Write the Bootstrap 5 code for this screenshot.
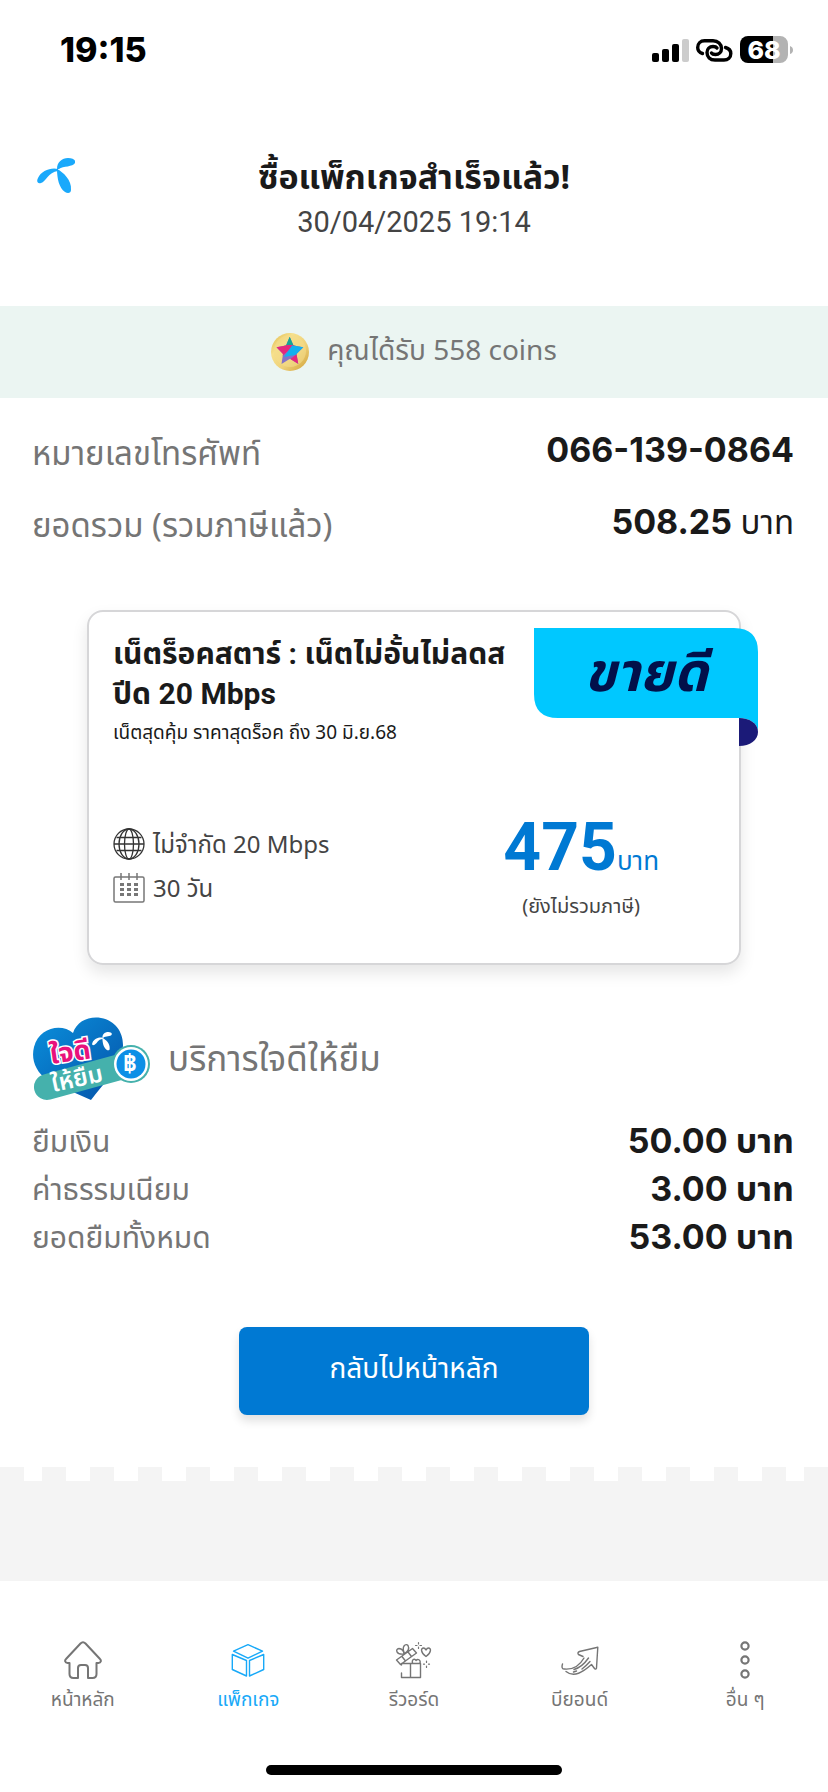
<!DOCTYPE html>
<html lang="th">
<head>
<meta charset="utf-8">
<meta name="viewport" content="width=device-width, initial-scale=1">
<title>ซื้อแพ็กเกจสำเร็จแล้ว!</title>
<link href="https://cdn.jsdelivr.net/npm/bootstrap@5.3.0/dist/css/bootstrap.min.css" rel="stylesheet">
<style>
  body { font-family: "Noto Sans", "Noto Sans Thai", sans-serif; color: #1a1a1a; background: #fff; font-size: 30px; line-height: 48px; }
  svg { display: block; flex: none; }
  .status { height: 100px; padding: 0 34px 0 60px; font-family: Inter, sans-serif; font-size: 34px; font-weight: 800; color: #000; }
  .batt { font: 800 25px Inter, sans-serif; }
  .page-head { height: 206px; padding: 52px 32px 0; }
  .brand { left: 37px; top: 58px; }
  .t-title { font-size: 34px; line-height: 48px; font-weight: 700; }
  .t-date { color: #444; font-family: Roboto, sans-serif; font-size: 29px; line-height: 44px; }
  .coins { height: 92px; background: #ebf5f2; color: #757575; gap: 18px; font-size: 28px; line-height: 40px; }
  .coins span { padding-bottom: 6px; }
  .muted { color: #757575; }
  .num { font-family: Inter, "Noto Sans Thai", sans-serif; font-size: 34px; font-weight: 700; }
  .detail { padding: 16px 34px 0 32px; font-size: 33px; }
  .detail > div { height: 72px; }
  .detail .muted { padding-top: 6px; }
  .pack { margin: 52px 87px 0; min-height: 355px; border: 2px solid #d6d6d8; border-radius: 16px; box-shadow: 0 8px 16px rgba(0,0,0,.1); padding: 22px 24px; }
  .pack h2 { font-family: Roboto, "Noto Sans Thai", sans-serif; font-size: 30px; line-height: 40px; font-weight: 700; margin: 0; }
  .pack-note { font-size: 19px; line-height: 36px; }
  .facts { margin-top: 62px; }
  .specs { padding-top: 10px; }
  .spec { font-size: 24px; line-height: 44px; color: #444; gap: 8px; }
  .price { margin-right: 56px; padding-top: 4px; font-size: 20px; line-height: 28px; color: #444; }
  .price p { color: #0079d3; font-size: 26px; line-height: 64px; margin: 0; }
  .price b { font-family: Roboto, sans-serif; font-size: 66px; }
  .ribbon { right: -19px; top: 16px; }
  .ribbon span { inset: 0 0 28px; color: #02104a; font-size: 54px; font-weight: 700; font-style: italic; line-height: 84px; }
  .loan { padding: 50px 34px 0 32px; }
  .loan h2 { font-size: 35px; line-height: 48px; font-weight: 400; margin: 0; }
  .loan-head { gap: 18px; margin-bottom: 16px; }
  .btn-home { width: 350px; height: 88px; margin: 66px 0 52px; background: #0079d3; color: #fff; font-size: 28px; border: 0; border-radius: 8px; box-shadow: 0 6px 10px rgba(0,0,0,.12); padding-bottom: 14px; }
  .btn-home:hover { background: #006bbb; color: #fff; }
  .tear { height: 114px; background: #f4f4f4; padding: 0 24px; }
  .tear div { height: 14px; background: repeating-linear-gradient(90deg, #fff 0 18px, #f4f4f4 18px 42px, #fff 42px 48px); }
  .tabs { height: 210px; padding-top: 60px; }
  .tabs a { flex: 1 1 0; text-align: center; text-decoration: none; color: #757575; font-size: 19px; line-height: 28px; }
  .tabs a.on { color: #18a9f8; }
  .tabs svg { margin: 0 auto 6px; fill: none; stroke: currentColor; stroke-linecap: round; stroke-linejoin: round; }
  .grip { width: 296px; height: 10px; border-radius: 5px; background: #000; bottom: 16px; }
</style>
</head>
<body>
<div class="status d-flex justify-content-between align-items-center">
  <span>19:15</span>
  <svg width="143" height="30" viewBox="0 0 143 30">
    <rect x="1" y="18" width="7" height="9" rx="2"/><rect x="11" y="14" width="7" height="13" rx="2"/><rect x="21" y="9" width="7" height="18" rx="2"/><rect x="31" y="4" width="7" height="23" rx="2" fill="#ccc"/>
    <g fill="none" stroke="#000" stroke-width="3.4" stroke-linecap="round" transform="translate(45 4)"><path d="M6.500 14.500C3 13.500 1.700 11 1.700 8.500C1.700 4.500 4.500 1.700 8.500 1.700H17C22 1.700 25.500 5 25.500 9.500C25.500 13 23 15.500 19.500 15.500C17.500 15.500 16 14.800 15.500 14"/><path d="M29.500 8.500C33 9.500 34.800 12 34.800 14.500C34.800 18.500 32 21 28 21H19C14 21 11 18 11 13.500C11 10 13.500 7.500 17 7.500C19 7.500 20.500 8.200 21 9"/></g>
    <path d="M97 1h25v27H97a8 8 0 0 1-8-8V9a8 8 0 0 1 8-8z"/><path d="M122 1h7a8 8 0 0 1 8 8v11a8 8 0 0 1-8 8h-7zM139 11q3 1 3 4t-3 4z" fill="#b3b3b3"/>
    <text class="batt" x="113" y="24" text-anchor="middle" fill="#fff">68</text>
  </svg>
</div>

<header class="page-head position-relative text-center">
  <a href="#" class="brand position-absolute" aria-label="ดีแทค">
    <svg width="38" height="36" viewBox="0 0 38 36" fill="#1aa9fb"><path d="M20 11C20 4 25 0 31 0c5 0 8 2 7 5-2 4-12 3-16 6z"/><path d="M21 11C14 9 4 13 1 20c-2 4 0 6 3 5C9 24 11 14 21 13z"/><path d="M20 11c6 3 15 11 14 21 0 3-3 4-6 2-6-4-8-14-8-23z"/></svg>
  </a>
  <h1 class="t-title m-0">ซื้อแพ็กเกจสำเร็จแล้ว!</h1>
  <div class="t-date">30/04/2025 19:14</div>
</header>

<main>
<section class="coins d-flex justify-content-center align-items-center">
  <svg width="38" height="38" viewBox="0 0 38 38">
    <defs>
      <linearGradient id="gold" x1="0" y1="0" x2="1" y2="1"><stop offset="0" stop-color="#e0b848"/><stop offset=".3" stop-color="#f6e08c"/><stop offset=".6" stop-color="#efd27a"/><stop offset="1" stop-color="#cf9f34"/></linearGradient>
      <clipPath id="star"><path d="M18.700 3.700L22.500 12.500L32.300 14.300L25.500 21L27.300 31L19 25.700L10.500 31L12 21L5.500 14.300L15 12.500z"/></clipPath>
    </defs>
    <circle cx="19" cy="19" r="19" fill="url(#gold)"/><circle cx="19" cy="18" r="16" fill="#f3dc8b" opacity=".6"/>
    <g clip-path="url(#star)"><path d="M0 0h38v38H0z" fill="#8472c8"/><path d="M0 0h38v13H0z" fill="#13a595"/><path d="M0 12h24L10 24H0z" fill="#e5287c"/><path d="M21 12.500h17v8L24 22l-11 2z" fill="#12b0ee"/><path d="M18 27l8-6 6 12z" fill="#e5287c"/></g>
  </svg>
  <span>คุณได้รับ 558 coins</span>
</section>

<section class="detail">
  <div class="d-flex justify-content-between align-items-center"><span class="muted">หมายเลขโทรศัพท์</span><span class="num">066-139-0864</span></div>
  <div class="d-flex justify-content-between align-items-center"><span class="muted">ยอดรวม (รวมภาษีแล้ว)</span><span><span class="num">508.25</span> บาท</span></div>
</section>

<article class="pack position-relative">
  <h2>เน็ตร็อคสตาร์ : เน็ตไม่อั้นไม่ลดส<br>ปีด 20 Mbps</h2>
  <div class="pack-note">เน็ตสุดคุ้ม ราคาสุดร็อค ถึง 30 มิ.ย.68</div>
  <div class="facts d-flex justify-content-between">
    <div class="specs">
      <div class="spec d-flex align-items-center">
        <svg width="32" height="32" viewBox="0 0 32 32" fill="none" stroke="#333" stroke-width="1.300"><circle cx="16" cy="16" r="15"/><ellipse cx="16" cy="16" rx="10" ry="15"/><ellipse cx="16" cy="16" rx="4.500" ry="15"/><path d="M1 16h30M3.500 9.500h25M3.500 22.500h25"/></svg>
        <span>ไม่จำกัด 20 Mbps</span>
      </div>
      <div class="spec d-flex align-items-center">
        <svg width="32" height="32" viewBox="0 0 32 32" fill="none" stroke="#777" stroke-width="1.500"><rect x="1" y="5" width="30" height="25" rx="1.500"/><path d="M8 1v7M16 1v7M24 1v7"/><path d="M7 12.500h18M7 17.500h18M7 22.500h18" stroke-width="3" stroke-dasharray="4 3"/></svg>
        <span>30 วัน</span>
      </div>
    </div>
    <div class="price text-center"><p><b>475</b>บาท</p><div>(ยังไม่รวมภาษี)</div></div>
  </div>
  <div class="ribbon position-absolute text-center">
    <svg width="224" height="118" viewBox="0 0 224 118"><path d="M0 0H200Q224 0 224 24V104C224 95 215 90 205 90H24Q0 90 0 66z" fill="#00c8ff"/><path d="M205 90V118C216 118 224 112 224 104C224 95 215 90 205 90z" fill="#1b1a78"/></svg>
    <span class="position-absolute">ขายดี</span>
  </div>
</article>

<section class="loan">
  <div class="loan-head d-flex align-items-center">
    <svg width="118" height="86" viewBox="0 -2 118 86">
      <defs><linearGradient id="heart" x1="0" y1="0" x2="1" y2="1"><stop offset="0" stop-color="#0a90dc"/><stop offset="1" stop-color="#0552a8"/></linearGradient></defs>
      <path d="M59 83L16 64C3 54-1 42 2 30C7 10 30 6 41 16C45 4 57-1 69 1C86 4 94 20 90 36C86 52 72 66 59 83z" fill="url(#heart)"/>
      <path d="M15 70L99 47" stroke="#45b1ac" stroke-width="26" stroke-linecap="round"/>
      <circle cx="99" cy="47" r="19" fill="#45b1ac"/><circle cx="99" cy="47" r="17" fill="#fff"/><circle cx="99" cy="47" r="14.500" fill="#0d8fe6"/>
      <text x="98" y="55" text-anchor="middle" font-size="24" font-weight="700" fill="#fff">฿</text>
      <g fill="#fff" transform="translate(60 15) scale(.52)"><path d="M20 11C20 4 25 0 31 0c5 0 8 2 7 5-2 4-12 3-16 6z"/><path d="M21 11C14 9 4 13 1 20c-2 4 0 6 3 5C9 24 11 14 21 13z"/><path d="M20 11c6 3 15 11 14 21 0 3-3 4-6 2-6-4-8-14-8-23z"/></g>
      <text x="19" y="47" font-size="27" font-weight="700" fill="#e8127c" stroke="#fff" stroke-width="3" paint-order="stroke" transform="rotate(-8 19 47)">ใจดี</text>
      <text x="21" y="75" font-size="24" font-weight="600" fill="#fff" transform="rotate(-12 21 75)">ให้ยืม</text>
    </svg>
    <h2 class="muted">บริการใจดีให้ยืม</h2>
  </div>
  <div class="d-flex justify-content-between"><span class="muted">ยืมเงิน</span><span class="num">50.00 บาท</span></div>
  <div class="d-flex justify-content-between"><span class="muted">ค่าธรรมเนียม</span><span class="num">3.00 บาท</span></div>
  <div class="d-flex justify-content-between"><span class="muted">ยอดยืมทั้งหมด</span><span class="num">53.00 บาท</span></div>
</section>

<div class="text-center"><button type="button" class="btn btn-home">กลับไปหน้าหลัก</button></div>
<div class="tear"><div></div></div>
</main>

<nav class="tabs d-flex position-relative">
  <a href="#"><svg width="38" height="38" viewBox="0 0 38 38" stroke-width="2"><path d="M5.500 22H3.500C1 22 .5 19.500 2 18L16.500 2.500q2.500-2.500 5 0L36 18c1.500 1.500 1 4-1.500 4h-2v11q0 4-4 4H24V27q0-3-3-3h-4q-3 0-3 3v10H9.500q-4 0-4-4z"/></svg>หน้าหลัก</a>
  <a href="#" class="on"><svg width="38" height="38" viewBox="0 0 38 38" stroke-width="1.400"><path d="M19 3.700L33.500 10.200L19 17.200L4.500 10.200zM3.300 13.500L17.500 19.500V35L3.300 28.500zM34.700 13.500L20.500 19.500V35L34.700 28.500z"/></svg>แพ็กเกจ</a>
  <a href="#"><svg width="38" height="38" viewBox="0 0 38 38" stroke-width="1.400"><path d="M6.500 24V22.500H25.500V36.500H6.500V32M15.500 22.500v14M1.500 19L17.500 7.500L21.500 12L5.500 23.500zM7 15.500l3.500 4.500M13 11l3.500 4.500M9 13C1 14 0 8 4 7.500c3 0 5 3 5 5.500zM9.500 12.500C6 5 11 2 13 4.500c1.500 3 0 6-3.500 8zM17.500 22.500c-1-5 2.500-5 3.500-3 1.500-2 5-1 4 3M31 15.500C25 11 26 7 28.500 7c1.500 0 2 1 2.500 2 .5-1 1-2 2.500-2C36 7 37 11 31 15.500z"/><path d="M23.500 1.500v1.500M23.500 6v1.500M20.500 4.500h1.500M25 4.500h1.500M31.500 20v1.500M31.500 25v1.500M28.500 23.200h1M33.500 23.200h1" stroke-width="1.200"/></svg>รีวอร์ด</a>
  <a href="#"><svg width="38" height="38" viewBox="0 0 38 38" stroke-width="1.400"><path d="M36.800 6.200L18.500 10.500q-2.500 1-1 3l4.500 2M3 28C1 28 .5 26 1.500 23M3 28C12 29 19 24 23 17M5 30.500C13 37 22 31 30.500 23.500l3 4q1.500 1.500 2-.5L36.800 6.200M13 28.500C20 26.500 24 22 27.500 17M21 28q4-3 8-7.500M12.500 31l3-1"/></svg>บียอนด์</a>
  <a href="#"><svg width="38" height="38" viewBox="0 0 38 38" stroke-width="2.200"><circle cx="19" cy="5" r="3.600"/><circle cx="19" cy="19" r="3.600"/><circle cx="19" cy="33" r="3.600"/></svg>อื่น ๆ</a>
  <div class="grip position-absolute start-50 translate-middle-x"></div>
</nav>
<script src="https://cdn.jsdelivr.net/npm/bootstrap@5.3.0/dist/js/bootstrap.bundle.min.js"></script>
</body>
</html>
